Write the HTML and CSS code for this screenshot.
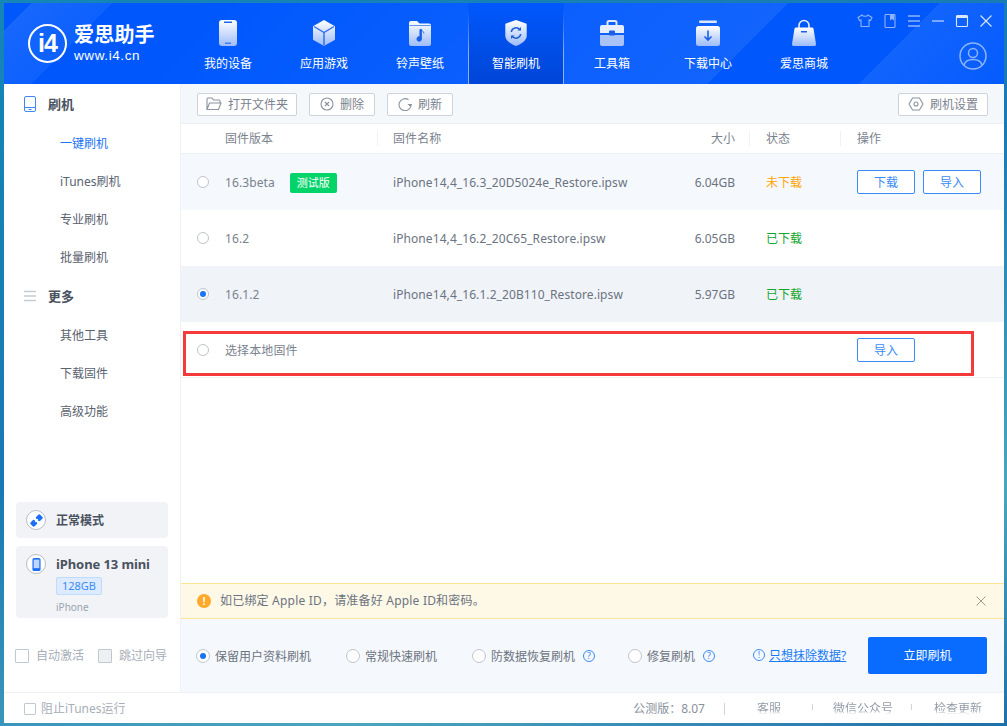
FILE: index.html
```html
<!DOCTYPE html>
<html lang="zh-CN">
<head>
<meta charset="utf-8">
<title>爱思助手</title>
<link rel="stylesheet" href="styles.css">
</head>
<body>
<svg class="defs" width="0" height="0" aria-hidden="true">
  <defs>
    <linearGradient id="ig" x1="0" y1="0" x2="0" y2="1">
      <stop offset="0" stop-color="#ffffff"/>
      <stop offset="1" stop-color="#9dbcf8"/>
    </linearGradient>
  </defs>
</svg>
<div class="window">
  <header class="header">
    <div class="brand">
      <div class="logo-mark"><span>i4</span></div>
      <div class="logo-text">
        <div class="logo-name">爱思助手</div>
        <div class="logo-url">www.i4.cn</div>
      </div>
    </div>
    <nav class="nav">
      <div class="nav-item">
        <svg width="24" height="28" viewBox="0 0 24 28"><rect x="3" y="1" width="18" height="26" rx="3" fill="url(#ig)"/><rect x="8" y="2.500" width="8" height="1.500" fill="#1f66f0"/><rect x="9" y="23.500" width="6" height="1.500" fill="#4a80ee"/></svg>
        <span>我的设备</span>
      </div>
      <div class="nav-item">
        <svg width="26" height="28" viewBox="0 0 26 28"><path d="M13 1l11 6.200v13.600L13 27 2 20.800V7.200z" fill="url(#ig)"/><path d="M3 7.500L13 13.500 23 7.500M13 13.500V26.500" fill="none" stroke="#2a6cf0" stroke-width="1.400"/></svg>
        <span>应用游戏</span>
      </div>
      <div class="nav-item">
        <svg width="24" height="28" viewBox="0 0 24 28"><path d="M1 4a2 2 0 0 1 2-2h6l2.500 2.500H21a2 2 0 0 1 2 2V25a2 2 0 0 1-2 2H3a2 2 0 0 1-2-2z" fill="url(#ig)"/><path d="M1.500 6.500h21" stroke="#3f78ee" stroke-width=".8"/><path d="M13.500 10.500v9.500a2.300 2.300 0 1 1-1.600-2.200v-7.300zM13.500 10.500c.4 1.800 2.400 2 2.400 4" fill="#1b5fe8" stroke="#1b5fe8" stroke-width=".8"/></svg>
        <span>铃声壁纸</span>
      </div>
      <div class="nav-item active">
        <svg width="24" height="28" viewBox="0 0 24 28"><path d="M12 1l10 3.500a1 1 0 0 1 .7 1V17c0 4.500-6 8.500-10.700 10C7.300 25.500 1.300 21.500 1.300 17V5.500a1 1 0 0 1 .7-1z" fill="url(#ig)"/><path d="M7.300 13a4.800 4.800 0 0 1 8.500-2.300M16.700 15a4.800 4.800 0 0 1-8.500 2.300" fill="none" stroke="#1d5fd8" stroke-width="1.500"/><path d="M17 8v3.600h-3.600zM7 20v-3.600h3.600z" fill="#1d5fd8"/></svg>
        <span>智能刷机</span>
      </div>
      <div class="nav-item">
        <svg width="26" height="28" viewBox="0 0 26 28"><path d="M8.500 6V3.500a1.500 1.500 0 0 1 1.500-1.500h6a1.500 1.500 0 0 1 1.500 1.500V6" fill="none" stroke="#dfe8fd" stroke-width="2"/><path d="M1 8a2 2 0 0 1 2-2h20a2 2 0 0 1 2 2v6H1z" fill="#e6edfd"/><path d="M1 16h24v9a2 2 0 0 1-2 2H3a2 2 0 0 1-2-2z" fill="#a9c3f8"/><rect x="10" y="11.500" width="6" height="5" rx="1" fill="#1b5fe8"/></svg>
        <span>工具箱</span>
      </div>
      <div class="nav-item">
        <svg width="26" height="28" viewBox="0 0 26 28"><rect x="4" y="1.500" width="18" height="2.500" rx="1" fill="#dbe6fd"/><rect x="1" y="7" width="24" height="20" rx="2.500" fill="url(#ig)"/><path d="M13 11.500v9M9.500 17.500l3.500 3.500 3.500-3.500" fill="none" stroke="#1b5fe8" stroke-width="1.600"/></svg>
        <span>下载中心</span>
      </div>
      <div class="nav-item">
        <svg width="26" height="28" viewBox="0 0 26 28"><path d="M8 10V6.500a5 5 0 0 1 10 0V10" fill="none" stroke="#e6edfd" stroke-width="1.600"/><path d="M5 8.500h16a1.500 1.500 0 0 1 1.500 1.200L25 25a1.700 1.700 0 0 1-1.700 2H2.700A1.700 1.700 0 0 1 1 25L3.500 9.700A1.500 1.500 0 0 1 5 8.500z" fill="url(#ig)"/><rect x="10" y="12" width="6" height="1.500" fill="#1b5fe8"/></svg>
        <span>爱思商城</span>
      </div>
    </nav>
    <div class="win-area">
      <div class="win-ctrls">
        <svg width="16" height="14" viewBox="0 0 16 14"><path d="M5 1L1 3.500l1.500 3 1.500-.5v6.500h8V6l1.500.5 1.500-3L11 1c-.6 1.700-5.400 1.700-6 0z" fill="none" stroke="#8db4ff" stroke-width="1.100"/></svg>
        <svg width="14" height="14" viewBox="0 0 14 14"><path d="M2 1.500a1 1 0 0 1 1-1h8a1 1 0 0 1 1 1v11a1 1 0 0 1-1 1H3a1 1 0 0 1-1-1z" fill="none" stroke="#8db4ff" stroke-width="1.100"/><path d="M7 .5h4v6L9 5 7 6.500z" fill="#8db4ff"/></svg>
        <svg width="14" height="14" viewBox="0 0 14 14"><path d="M1 2h12M1 7h12M1 12h12" fill="none" stroke="#8db4ff" stroke-width="1.300"/></svg>
        <svg width="14" height="14" viewBox="0 0 14 14"><path d="M1 7h12" fill="none" stroke="#b4ceff" stroke-width="1.300"/></svg>
        <svg width="14" height="14" viewBox="0 0 14 14"><rect x="1.500" y="1.500" width="11" height="11" rx="1" fill="none" stroke="#dbe7ff" stroke-width="1.100"/><rect x="1.500" y="1.500" width="11" height="2.500" fill="#dbe7ff"/></svg>
        <svg width="14" height="14" viewBox="0 0 14 14"><path d="M1.500 1.500l11 11M12.500 1.500l-11 11" fill="none" stroke="#dbe7ff" stroke-width="1.100"/></svg>
      </div>
      <svg class="avatar" width="28" height="28" viewBox="0 0 28 28"><circle cx="14" cy="14" r="13" fill="none" stroke="#8db4ff" stroke-width="1.500"/><circle cx="14" cy="11" r="4.500" fill="none" stroke="#8db4ff" stroke-width="1.500"/><path d="M5 23c1-4 5-5.500 9-5.500s8 1.500 9 5.500" fill="none" stroke="#8db4ff" stroke-width="1.500"/></svg>
    </div>
  </header>

  <div class="body">
    <aside class="sidebar">
      <div class="side-group">
        <svg width="12" height="16" viewBox="0 0 12 16"><rect x=".5" y=".5" width="11" height="15" rx="1.500" fill="none" stroke="#3f88f0"/><path d="M.5 11.500h11M4.500 13.500h3" stroke="#3f88f0" fill="none"/></svg>
        <span>刷机</span>
      </div>
      <div class="side-item current">一键刷机</div>
      <div class="side-item">iTunes刷机</div>
      <div class="side-item">专业刷机</div>
      <div class="side-item">批量刷机</div>
      <div class="side-group">
        <svg width="12" height="12" viewBox="0 0 12 12"><path d="M0 1.500h12M0 6h12M0 10.500h12" stroke="#c6cbd4" stroke-width="1.300" fill="none"/></svg>
        <span>更多</span>
      </div>
      <div class="side-item">其他工具</div>
      <div class="side-item">下载固件</div>
      <div class="side-item">高级功能</div>
      <div class="side-spacer"></div>
      <div class="mode-card">
        <span class="round-icon"><svg width="14" height="14" viewBox="0 0 14 14"><rect x="7" y="1" width="6" height="6" rx="1.500" transform="rotate(45 10 4)" fill="#1a6ff5"/><rect x="1" y="7" width="6" height="6" rx="1.500" transform="rotate(45 4 10)" fill="#1a6ff5"/><path d="M5.500 8.500l3-3" stroke="#fff" stroke-width="1.200"/></svg></span>
        <span>正常模式</span>
      </div>
      <div class="device-card">
        <span class="round-icon"><svg width="12" height="16" viewBox="0 0 12 16"><rect x="1" y="0" width="10" height="16" rx="2" fill="#1a6ff5"/><rect x="2.500" y="2" width="7" height="10.500" fill="#bcd6ff"/></svg></span>
        <div class="device-info">
          <div class="device-name">iPhone 13 mini</div>
          <div class="device-cap">128GB</div>
          <div class="device-type">iPhone</div>
        </div>
      </div>
      <div class="side-checks">
        <label class="check-line"><i class="box"></i>自动激活</label>
        <label class="check-line"><i class="box off"></i>跳过向导</label>
      </div>
    </aside>

    <main class="main">
      <div class="toolbar">
        <button class="tool-btn"><svg width="16" height="14" viewBox="0 0 16 14"><path d="M1 12.500V2a1 1 0 0 1 1-1h4l1.500 2H13a1 1 0 0 1 1 1v1.500M1 12.500h11.500L15 6H3.500z" fill="none" stroke="#8a93a0" stroke-width="1.100"/></svg><span>打开文件夹</span></button>
        <button class="tool-btn"><svg width="14" height="14" viewBox="0 0 14 14"><circle cx="7" cy="7" r="6" fill="none" stroke="#8a93a0" stroke-width="1.100"/><path d="M5 5l4 4M9 5l-4 4" stroke="#8a93a0" stroke-width="1.100"/></svg><span>删除</span></button>
        <button class="tool-btn"><svg width="14" height="14" viewBox="0 0 14 14"><path d="M10.500 2.800A6 6 0 1 0 13 7" fill="none" stroke="#8a93a0" stroke-width="1.100"/><path d="M9.500 7h5l-2.500 2.500z" fill="#8a93a0"/></svg><span>刷新</span></button>
        <button class="tool-btn push"><svg width="16" height="14" viewBox="0 0 16 14"><path d="M4.500 1h7L15 7l-3.500 6h-7L1 7z" fill="none" stroke="#8a93a0" stroke-width="1.100"/><circle cx="8" cy="7" r="2" fill="none" stroke="#8a93a0" stroke-width="1.100"/></svg><span>刷机设置</span></button>
      </div>

      <div class="table">
        <div class="t-row t-head">
          <div class="c-ver">固件版本</div>
          <div class="c-name sep">固件名称</div>
          <div class="c-size">大小</div>
          <div class="c-state sep">状态</div>
          <div class="c-act sep">操作</div>
        </div>
        <div class="t-row stripe">
          <div class="c-ver"><i class="radio"></i><span class="ver">16.3beta</span><em class="beta">测试版</em></div>
          <div class="c-name">iPhone14,4_16.3_20D5024e_Restore.ipsw</div>
          <div class="c-size">6.04GB</div>
          <div class="c-state wait">未下载</div>
          <div class="c-act"><button class="line-btn">下载</button><button class="line-btn">导入</button></div>
        </div>
        <div class="t-row">
          <div class="c-ver"><i class="radio"></i><span class="ver">16.2</span></div>
          <div class="c-name">iPhone14,4_16.2_20C65_Restore.ipsw</div>
          <div class="c-size">6.05GB</div>
          <div class="c-state done">已下载</div>
          <div class="c-act"></div>
        </div>
        <div class="t-row picked">
          <div class="c-ver"><i class="radio on"></i><span class="ver">16.1.2</span></div>
          <div class="c-name">iPhone14,4_16.1.2_20B110_Restore.ipsw</div>
          <div class="c-size">5.97GB</div>
          <div class="c-state done">已下载</div>
          <div class="c-act"></div>
        </div>
        <div class="t-row local">
          <div class="c-ver"><i class="radio"></i><span class="ver">选择本地固件</span></div>
          <div class="c-name"></div>
          <div class="c-size"></div>
          <div class="c-state"></div>
          <div class="c-act"><button class="line-btn">导入</button></div>
          <div class="red-frame"></div>
        </div>
      </div>

      <div class="notice">
        <span class="notice-icon">!</span>
        <span class="notice-text">如已绑定 Apple ID，请准备好 Apple ID和密码。</span>
        <svg class="notice-close" width="10" height="10" viewBox="0 0 10 10"><path d="M.5.500l9 9M9.500.500l-9 9" stroke="#9a9a94" fill="none"/></svg>
      </div>

      <div class="options">
        <label class="opt opt-a"><i class="radio on"></i>保留用户资料刷机</label>
        <label class="opt opt-b"><i class="radio"></i>常规快速刷机</label>
        <label class="opt opt-c"><i class="radio"></i>防数据恢复刷机<span class="qmark">?</span></label>
        <label class="opt opt-d"><i class="radio"></i>修复刷机<span class="qmark">?</span></label>
        <a class="erase"><span class="qmark">!</span><u>只想抹除数据?</u></a>
        <button class="flash-btn">立即刷机</button>
      </div>
    </main>
  </div>

  <footer class="status">
    <label class="check-line block-itunes"><i class="box small"></i>阻止iTunes运行</label>
    <div class="status-right">
      <span class="st-ver">公测版：8.07</span>
      <i class="st-sep first"></i>
      <span class="st-a fade">客服</span>
      <i class="st-sep short"></i>
      <span class="st-b fade">微信公众号</span>
      <i class="st-sep short"></i>
      <span class="st-c fade">检查更新</span>
    </div>
  </footer>
</div>
</body>
</html>
```

FILE: styles.css
```css
* { box-sizing: border-box; }
html, body { margin: 0; height: 100%; }
body {
  padding: 3px 3px 3px 4px;
  background: linear-gradient(160deg, #1486b8 0%, #1a78b4 45%, #4aa6bd 78%, #1f6fa8 100%);
  font: 12px/1.4 "Noto Sans", "Noto Sans CJK SC", sans-serif;
  color: #5f6875;
  overflow: hidden;
}
.defs { position: absolute; }
button { font: inherit; cursor: pointer; }
i, em { font-style: normal; }

.window { width: 1000px; height: 720px; background: #fff; display: flex; flex-direction: column; }

/* header */
.header {
  height: 81px; flex: none; display: flex; color: #fff;
  background:
    linear-gradient(135deg, transparent 2.5%, rgba(255,255,255,.09) 2.5%, rgba(255,255,255,.05) 10%, transparent 10%),
    linear-gradient(135deg, rgba(255,255,255,0) 20%, rgba(255,255,255,.07) 72.500%, transparent 72.600%),
    linear-gradient(135deg, transparent 86.500%, rgba(255,255,255,.07) 86.600%, rgba(255,255,255,.02) 100%),
    #0058fd;
}
.brand { width: 176px; display: flex; align-items: center; padding-left: 24px; gap: 7px; }
.logo-mark {
  width: 39px; height: 39px; border: 2px solid #fff; border-radius: 50%; flex: none;
  display: flex; align-items: center; justify-content: center;
}
.logo-mark span { font: 700 25px/1 "Liberation Sans", sans-serif; letter-spacing: -1px; }
.logo-text { line-height: 1; white-space: nowrap; padding-top: 1px; }
.logo-name { font: 700 20px/22px "Noto Sans CJK SC", sans-serif; letter-spacing: .2px; }
.logo-url { font: 13.500px/18px "Liberation Sans", sans-serif; margin-top: 2px; letter-spacing: .6px; }

.nav { display: flex; }
.nav-item {
  width: 96px; display: flex; flex-direction: column; align-items: center;
  padding-top: 16px; gap: 8px; line-height: 17px; position: relative;
}
.nav-item svg { display: block; }
.nav-item.active {
  background: linear-gradient(180deg, #0058fd 0%, #0046d6 100%);
  border-left: 1px solid; border-right: 1px solid;
  border-image: linear-gradient(180deg, rgba(140,176,245,0) 8%, #8cb0f5 60%) 1;
}

.win-area { flex: 1; display: flex; flex-direction: column; align-items: flex-end; padding: 11px 11px 0 0; }
.win-ctrls { display: flex; align-items: center; gap: 10px; }
.avatar { margin-top: 14px; margin-right: 6px; }

/* body */
.body { flex: 1; min-height: 0; display: flex; }
.sidebar {
  width: 177px; flex: none; padding-top: 1px; display: flex; flex-direction: column;
  border-right: 1px solid #eef1f5;
}
.side-group {
  height: 38px; margin-bottom: 2px; display: flex; align-items: center; padding-left: 20px;
  font-weight: 700; font-size: 13px; color: #4a5260;
}
.side-group svg { width: 12px; margin-right: 12px; flex: none; }
.side-item { height: 38px; line-height: 38px; padding-left: 56px; color: #5a6270; }
.side-item.current { color: #1a73f5; }
.side-spacer { flex: 1; }
.mode-card, .device-card { margin: 0 12px; background: #f1f3f7; border-radius: 4px; display: flex; }
.mode-card { height: 36px; align-items: center; gap: 10px; padding: 0 0 0 10px; font-weight: 700; color: #4a5260; }
.mode-card > span:last-child { position: relative; top: 1px; }
.device-card { height: 72px; margin-top: 8px; padding: 8px 0 0 10px; gap: 10px; }
.round-icon {
  width: 20px; height: 20px; border: 1px solid #b8bec8; border-radius: 50%; background: #fff; flex: none;
  display: flex; align-items: center; justify-content: center;
}
.round-icon svg { width: 13px; height: 13px; }
.device-name { font-weight: 700; font-size: 13px; line-height: 20px; letter-spacing: -.1px; color: #4a5260; white-space: nowrap; }
.device-cap {
  width: 46px; height: 18px; margin-top: 3px; border: 1px solid #bfdcff; border-radius: 2px;
  background: #dcebff; color: #3a8bf5; text-align: center; font-size: 11px; line-height: 16px;
}
.device-type { font-size: 10px; line-height: 14px; margin-top: 5px; color: #9aa3b0; }
.side-checks { height: 74px; display: flex; align-items: center; gap: 14px; padding: 2px 0 0 11px; }
.check-line { display: flex; align-items: center; gap: 7px; color: #a7aeb8; white-space: nowrap; }
.box { width: 14px; height: 14px; border: 1px solid #c0c8d2; border-radius: 1px; background: #fff; flex: none; }
.box.off { background: #eef0f3; }
.box.small { width: 12px; height: 12px; }

/* main */
.main { flex: 1; min-width: 0; display: flex; flex-direction: column; }
.toolbar {
  height: 40px; flex: none; background: #f5f8fb; border-bottom: 1px solid #eceff3;
  display: flex; align-items: center; gap: 12px; padding: 1px 16px 0 16px;
}
.tool-btn {
  height: 23px; min-width: 66px; padding: 0 8px; border: 1px solid #ced3da; border-radius: 2px; background: #fff;
  color: #7a828e; display: flex; align-items: center; justify-content: center; gap: 6px; line-height: 1;
}
.tool-btn span { position: relative; top: 1px; }
.tool-btn.push { margin-left: auto; width: 90px; }

.table { flex: 1; min-height: 0; }
.t-row {
  display: grid; grid-template-columns: 196px 300px 72px 91px 1fr;
  height: 56px; align-items: center; position: relative; color: #6b7380;
}
.t-row.t-head { height: 30px; color: #7a828e; border-bottom: 1px solid #eef1f5; }
.t-row.stripe { background: #f5f8fc; }
.t-row.picked { background: #f0f3f8; }
.t-row.local { border-bottom: 1px solid #eef1f5; }
.c-ver, .c-name, .c-size, .c-state { padding-top: 2px; }
.t-head .c-act { padding-top: 2px; }
.t-row.local .c-ver { padding-top: 4px; }
.t-row.local .line-btn { margin-top: 1px; }
.c-ver { display: flex; align-items: center; padding-left: 44px; min-width: 0; white-space: nowrap; }
.t-row:not(.t-head) .c-ver { padding-left: 16px; }
.c-ver .radio { margin-right: 16px; position: relative; top: -1px; }
.ver { color: #7a828e; letter-spacing: .1px; }
.c-name { padding-left: 16px; white-space: nowrap; letter-spacing: .08px; }
.c-size { text-align: right; padding-right: 14px; }
.c-state, .c-act { padding-left: 17px; }
.c-act { display: flex; gap: 8px; }
.sep { position: relative; }
.sep::before {
  content: ""; position: absolute; left: 0; top: 2px; bottom: 2px; width: 1px; background: #f0f2f5;
}
.wait { color: #ffa500; }
.done { color: #12a52a; }
.beta {
  margin-left: 15px; width: 47px; height: 20px; background: #03d469; color: #fff; border-radius: 2px;
  text-align: center; font-size: 11px; line-height: 20px;
}
.radio {
  width: 12px; height: 12px; border: 1px solid #c0c5cd; border-radius: 50%; background: #fff;
  display: inline-block; flex: none; position: relative;
}
.radio.on::after {
  content: ""; position: absolute; left: 2px; top: 2px; width: 6px; height: 6px; border-radius: 50%; background: #1a73f5;
}
.line-btn {
  width: 58px; height: 24px; border: 1px solid #3a8bf5; border-radius: 2px; background: #fff;
  color: #3a8bf5; padding: 2px 0 0; line-height: 1;
}
.red-frame {
  position: absolute; left: 2px; top: 9px; width: 791px; height: 45px; border: 3px solid #f53a3c; pointer-events: none;
}

.notice {
  height: 36px; flex: none; background: #fef9e7; border: 1px solid #fbe595; border-width: 1px 0;
  display: flex; align-items: center; padding: 0 18px 0 16px; color: #6b7380;
}
.notice-icon {
  width: 14px; height: 14px; border-radius: 50%; background: #ffa928; color: #fff; flex: none;
  text-align: center; font: 700 11px/14px "Liberation Sans", sans-serif;
}
.notice-text { margin-left: 9px; flex: 1; letter-spacing: .2px; }
.options {
  height: 73px; flex: none; background: #f5f8fc; display: flex; align-items: center;
  padding: 0 17px 0 15px; color: #6b7380;
}
.opt { display: flex; align-items: center; gap: 5px; white-space: nowrap; padding-top: 3px; }
.opt .radio { width: 14px; height: 14px; top: -1px; }
.opt .radio.on::after { left: 3px; top: 3px; }
.opt .qmark { margin-left: 3px; position: relative; top: -1px; }
.opt-b { margin-left: 35px; }
.opt-c { margin-left: 35px; }
.opt-d { margin-left: 33px; }
.qmark {
  width: 12px; height: 12px; border: 1px solid #3a8bf5; border-radius: 50%; color: #3a8bf5;
  font-size: 9px; line-height: 10px; text-align: center; flex: none; display: inline-block;
}
.erase { margin-left: 38px; padding-top: 2px; color: #1a7bf5; display: flex; align-items: center; gap: 4px; white-space: nowrap; }
.erase .qmark { position: relative; top: -1px; }
.flash-btn {
  margin-left: auto; width: 119px; height: 37px; border: 0; border-radius: 2px; background: #0a6cff;
  color: #fff; padding: 2px 0 0;
}

.status {
  height: 31px; flex: none; border-top: 1px solid #eef1f5; display: flex; align-items: center;
  padding: 2px 0 0 20px; color: #a7aeb8;
}
.block-itunes { gap: 5px; }
.status-right { margin-left: auto; display: flex; align-items: center; color: #9aa1ab; white-space: nowrap; }
.st-ver { color: #8a919c; }
.st-sep { width: 1px; height: 12px; background: #d0d4da; }
.st-sep.first { margin: 0 32px 0 19px; }
.st-sep.short { height: 6px; position: relative; top: -2px; }
.st-a + .st-sep { margin: 0 20px 0 31px; }
.st-b + .st-sep { margin: 0 22px 0 18px; }
.st-c { margin-right: 22px; }
.fade {
  color: transparent;
  background: linear-gradient(180deg, #8f97a3 58%, #e6e9ee 78%, #fff 90%);
  -webkit-background-clip: text;
  background-clip: text;
}
```
